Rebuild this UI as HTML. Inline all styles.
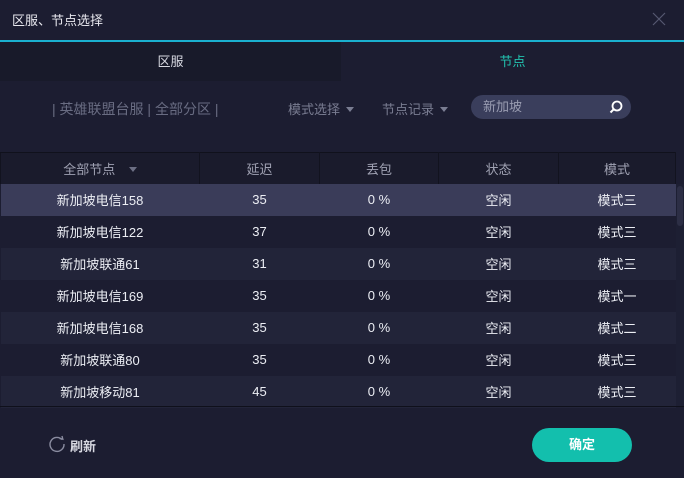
<!DOCTYPE html>
<html><head><meta charset="utf-8"><style>
*{margin:0;padding:0;box-sizing:border-box}
body{width:684px;height:478px;background:#1c1d31;font-family:"Liberation Sans","Noto Sans CJK SC",sans-serif;color:#e6e7ee;position:relative;overflow:hidden;font-size:13px}
.abs{position:absolute}
.title{left:12px;top:10px;font-size:13px;color:#e8e8ee}
.close{right:18px;top:12px;width:14px;height:14px}
.line{left:0;top:40px;width:684px;height:2px;background:#1ab0cf}
.tabl{left:0;top:42px;width:341px;height:39px;background:#181a2a;text-align:center;line-height:39px;color:#d8d9e2}
.tabr{left:341px;top:42px;width:343px;height:39px;text-align:center;line-height:39px;color:#22c3b0}
.crumb{left:52px;top:99px;color:#696c82;font-size:14px}
.dd{top:99px;color:#7a7d92;font-size:13px}
.tri{display:inline-block;width:0;height:0;border-left:4px solid transparent;border-right:4px solid transparent;border-top:5px solid #7a7d92;margin-left:6px;vertical-align:2px}
.search{left:471px;top:95px;width:160px;height:24px;border-radius:12px;background:#3a3e5c;color:#9a9db2;font-size:13px;line-height:24px;padding-left:12px}
table{position:absolute;left:0;top:152px;width:676px;border-collapse:collapse}
th{height:31px;background:#1a1b2c;color:#a0a2b3;font-weight:normal;font-size:13px;border-left:1px solid #12131f;border-right:1px solid #12131f;border-top:1px solid #10111c}
td{height:32px;text-align:center;font-size:13px;color:#eceef4;padding-bottom:1px}
tr.a td{background:#1c1d31}
tr.b td{background:#222439}
tr.s td{background:#3a3c59}
.sb{left:676px;top:184px;width:8px;height:222px;background:#1d1f33}
.sbt{left:677px;top:186px;width:6px;height:40px;background:#2c2e45;border-radius:3px}
.foot{left:0;top:406px;width:684px;height:1px;background:#0f101b}
.ref{left:48px;top:436px;color:#d8d9e2;font-size:13px;font-weight:bold}
.btn{left:532px;top:428px;width:100px;height:34px;border-radius:17px;background:#13bfad;color:#fff;text-align:center;line-height:34px;font-weight:bold;font-size:13px}
</style></head><body>
<div class="abs title">区服、节点选择</div>
<svg class="abs close" viewBox="0 0 14 14"><path d="M1 1L13 13M13 1L1 13" stroke="#555870" stroke-width="1.2"/></svg>
<div class="abs line"></div>
<div class="abs tabl">区服</div>
<div class="abs tabr">节点</div>
<div class="abs crumb">| 英雄联盟台服 | 全部分区 |</div>
<div class="abs dd" style="left:288px">模式选择<span class="tri"></span></div>
<div class="abs dd" style="left:382px">节点记录<span class="tri"></span></div>
<div class="abs search">新加坡
<svg style="position:absolute;right:8px;top:5px" width="14" height="14" viewBox="0 0 14 14"><circle cx="8" cy="6" r="4.5" stroke="#fff" stroke-width="1.8" fill="none"/><path d="M4.8 9.2L1.5 12.5" stroke="#fff" stroke-width="2"/></svg></div>
<table>
<tr><th style="width:199px">全部节点 <span class="tri" style="margin-left:10px;border-top-color:#6c6f84"></span></th><th style="width:120px">延迟</th><th style="width:119px">丢包</th><th style="width:120px">状态</th><th>模式</th></tr>
<tr class="s"><td>新加坡电信158</td><td>35</td><td>0 %</td><td>空闲</td><td>模式三</td></tr>
<tr class="a"><td>新加坡电信122</td><td>37</td><td>0 %</td><td>空闲</td><td>模式三</td></tr>
<tr class="b"><td>新加坡联通61</td><td>31</td><td>0 %</td><td>空闲</td><td>模式三</td></tr>
<tr class="a"><td>新加坡电信169</td><td>35</td><td>0 %</td><td>空闲</td><td>模式一</td></tr>
<tr class="b"><td>新加坡电信168</td><td>35</td><td>0 %</td><td>空闲</td><td>模式二</td></tr>
<tr class="a"><td>新加坡联通80</td><td>35</td><td>0 %</td><td>空闲</td><td>模式三</td></tr>
<tr class="b"><td>新加坡移动81</td><td>45</td><td>0 %</td><td>空闲</td><td>模式三</td></tr>
</table>
<div class="abs sb"></div><div class="abs sbt"></div>
<div class="abs foot"></div>
<svg class="abs" style="left:48px;top:435px" width="18" height="18" viewBox="0 0 18 18"><path d="M14 4.5A7 7 0 1 0 16 9" stroke="#8a8ca0" stroke-width="1.4" fill="none"/><path d="M11.5 3.5L14.8 4.2L14 1" stroke="#8a8ca0" stroke-width="1.4" fill="none"/></svg>
<div class="abs ref" style="left:70px">刷新</div>
<div class="abs btn">确定</div>
</body></html>
